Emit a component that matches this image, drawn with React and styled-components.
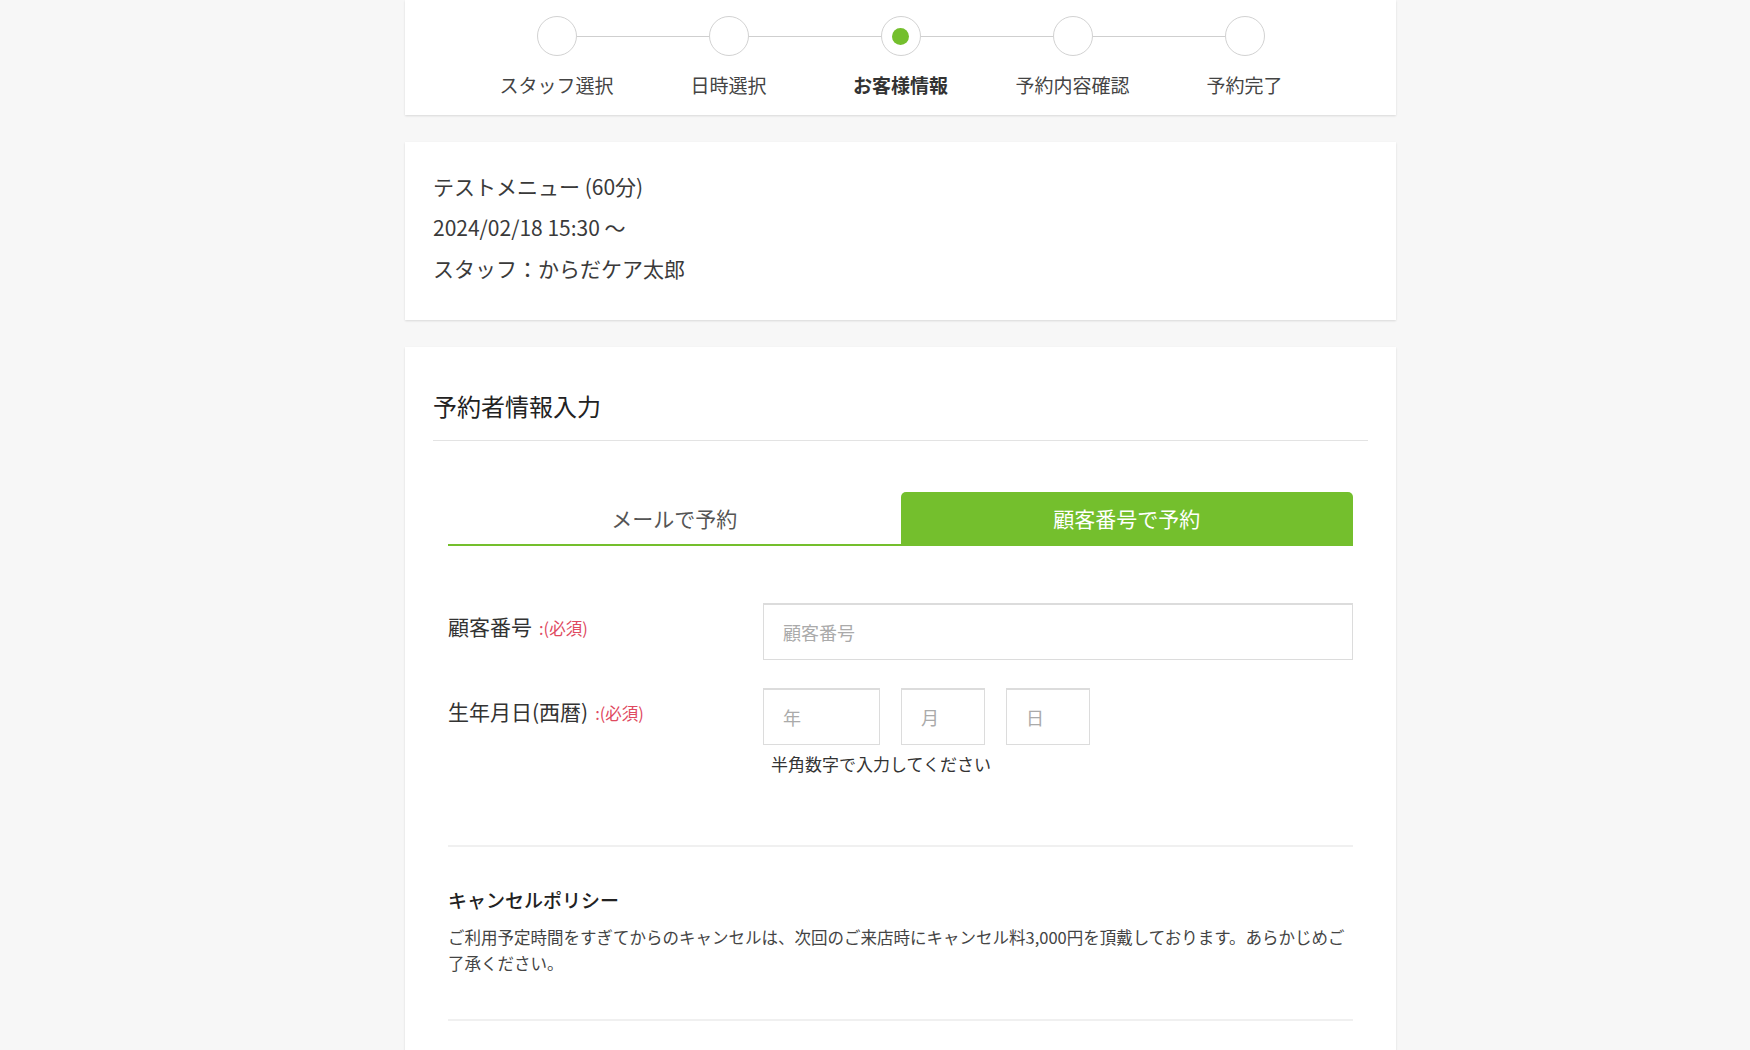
import styled, { createGlobalStyle } from "styled-components";

const GREEN = "#74bf2d";

const GlobalStyle = createGlobalStyle`
  body {
    margin: 0;
    background: #f7f7f7;
    font-family: "Noto Sans CJK JP", "Noto Sans", sans-serif;
    color: #333;
  }
`;

const STEPS = ["スタッフ選択", "日時選択", "お客様情報", "予約内容確認", "予約完了"];
const CURRENT_STEP = 2;

const App = () => {
  return (
    <Page>
      <GlobalStyle />
      <Column>
        <StepCard>
          <StepList>
            {STEPS.map((step, index) => (
              <Step key={step} $last={index === STEPS.length - 1}>
                <Circle>{index === CURRENT_STEP && <Dot />}</Circle>
                <StepLabel $active={index === CURRENT_STEP}>{step}</StepLabel>
              </Step>
            ))}
          </StepList>
        </StepCard>

        <SummaryCard>
          <SummaryLine>テストメニュー (60分)</SummaryLine>
          <SummaryLine>2024/02/18 15:30 〜</SummaryLine>
          <SummaryLine>スタッフ：からだケア太郎</SummaryLine>
        </SummaryCard>

        <FormCard>
          <CardTitle>予約者情報入力</CardTitle>
          <Inner>
            <Tabs>
              <Tab>メールで予約</Tab>
              <Tab $active>顧客番号で予約</Tab>
            </Tabs>

            <FormRows>
              <FormRow>
                <Label>
                  顧客番号<Required>:(必須)</Required>
                </Label>
                <Field>
                  <Input $width="590px" placeholder="顧客番号" />
                </Field>
              </FormRow>
              <FormRow>
                <Label>
                  生年月日(西暦)<Required>:(必須)</Required>
                </Label>
                <Field>
                  <DateGroup>
                    <Input $width="117px" placeholder="年" />
                    <Input $width="84px" placeholder="月" />
                    <Input $width="84px" placeholder="日" />
                  </DateGroup>
                  <Note>半角数字で入力してください</Note>
                </Field>
              </FormRow>
            </FormRows>

            <Policy>
              <PolicyTitle>キャンセルポリシー</PolicyTitle>
              <PolicyText>
                ご利用予定時間をすぎてからのキャンセルは、次回のご来店時にキャンセル料3,000円を頂戴しております。あらかじめご了承ください。
              </PolicyText>
            </Policy>
          </Inner>
        </FormCard>
      </Column>
    </Page>
  );
};

export default App;

const Page = styled.div`
  height: 1050px;
  overflow: hidden;
  padding-left: 405px;
`;

const Column = styled.div`
  width: 991px;
  display: flex;
  flex-direction: column;
  gap: 27px;
`;

const Card = styled.div`
  background: #fff;
  box-shadow: 0 1px 2px rgba(0, 0, 0, 0.12);
`;

const StepCard = styled(Card)`
  height: 115px;
  box-sizing: border-box;
  padding-top: 16px;
`;

const StepList = styled.div`
  display: flex;
  justify-content: center;
`;

const Step = styled.div`
  width: 172px;
  display: flex;
  flex-direction: column;
  align-items: center;
  position: relative;
  /* 次のステップへの線 */
  &::after {
    content: "";
    display: ${({ $last }) => ($last ? "none" : "block")};
    position: absolute;
    top: 20px;
    left: calc(50% + 20px);
    width: 132px;
    height: 1px;
    background: #cfcfcf;
  }
`;

const Circle = styled.div`
  width: 40px;
  height: 40px;
  box-sizing: border-box;
  border: 1px solid #d2d2d2;
  border-radius: 50%;
  background: #fff;
  display: flex;
  align-items: center;
  justify-content: center;
`;

const Dot = styled.div`
  width: 17px;
  height: 17px;
  border-radius: 50%;
  background: ${GREEN};
`;

const StepLabel = styled.div`
  margin-top: 15px;
  font-size: 19px;
  line-height: 28px;
  color: ${({ $active }) => ($active ? "#333" : "#444")};
  font-weight: ${({ $active }) => ($active ? 700 : 400)};
  white-space: nowrap;
`;

const SummaryCard = styled(Card)`
  padding: 24px 28px 31px;
`;

const SummaryLine = styled.div`
  font-size: 21px;
  line-height: 41px;
  color: #3a3a3a;
`;

const FormCard = styled(Card)`
  padding: 42px 28px 0;
  min-height: 760px;
`;

const CardTitle = styled.h2`
  margin: 0;
  font-size: 24px;
  line-height: 34px;
  font-weight: 400;
  color: #222;
  padding-bottom: 17px;
  border-bottom: 1px solid #e3e3e3;
`;

const Inner = styled.div`
  padding: 51px 15px 0;
`;

const Tabs = styled.div`
  display: flex;
  border-bottom: 2px solid ${GREEN};
`;

const Tab = styled.div`
  flex: 1;
  height: 52px;
  display: flex;
  align-items: center;
  justify-content: center;
  font-size: 21px;
  border-radius: 5px 5px 0 0;
  background: ${({ $active }) => ($active ? GREEN : "transparent")};
  color: ${({ $active }) => ($active ? "#fff" : "#555")};
`;

const FormRows = styled.div`
  display: flex;
  flex-direction: column;
  gap: 28px;
  padding-top: 57px;
`;

const FormRow = styled.div`
  display: flex;
`;

const Label = styled.div`
  width: 315px;
  flex-shrink: 0;
  padding-top: 7px;
  font-size: 21px;
  line-height: 32px;
  color: #333;
`;

const Required = styled.span`
  margin-left: 7px;
  font-size: 16.5px;
  color: #e04a5f;
`;

const Field = styled.div`
  display: flex;
  flex-direction: column;
`;

const DateGroup = styled.div`
  display: flex;
  gap: 21px;
`;

const Input = styled.input`
  width: ${({ $width }) => $width};
  height: 57px;
  box-sizing: border-box;
  border: 1px solid #dcdcdc;
  border-top-width: 2px;
  border-radius: 0;
  padding: 0 19px;
  font-family: inherit;
  font-size: 18px;
  color: #333;
  background: #fff;
  outline: none;
  &::placeholder {
    color: #aaa;
  }
`;

const Note = styled.div`
  margin-top: 6px;
  padding-left: 8px;
  font-size: 17px;
  line-height: 26px;
  color: #333;
`;

const Policy = styled.div`
  margin-top: 68px;
  border-top: 2px solid #f0f0f0;
  border-bottom: 2px solid #f0f0f0;
  padding: 39px 0 43px;
`;

const PolicyTitle = styled.div`
  font-size: 19px;
  line-height: 28px;
  font-weight: 500;
  color: #222;
`;

const PolicyText = styled.p`
  margin: 10px 0 0;
  font-size: 16.5px;
  line-height: 26px;
  color: #444;
`;
